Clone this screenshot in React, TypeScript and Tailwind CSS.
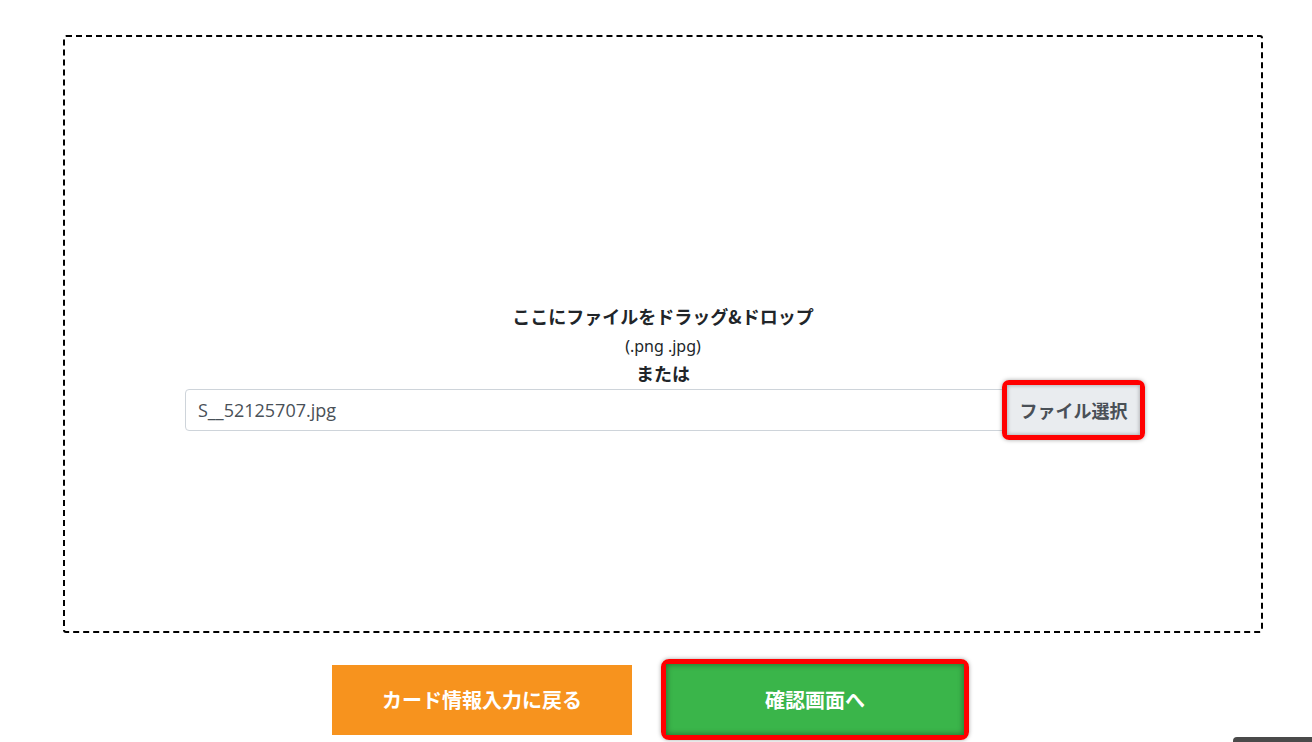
export default function App() {
  return (
    <div className="w-[1312px] h-[742px] bg-white overflow-hidden relative" style={{ fontFamily: '"Noto Sans CJK JP", "Noto Sans", sans-serif' }}>
      {/* ドロップエリア */}
      <div className="ml-[63px] mt-[35px] w-[1200px] h-[598px] border-2 border-dashed border-black rounded-[3px] flex flex-col items-center pt-[267px]">
        <div className="flex flex-col items-center text-[#212529]">
          <p className="text-[18px] font-bold leading-[24px]">ここにファイルをドラッグ&amp;ドロップ</p>
          <p className="text-[16px] leading-[28px] mt-[4px]" style={{ fontFamily: '"Noto Sans", "Noto Sans CJK JP", sans-serif' }}>(.png .jpg)</p>
          <p className="text-[18px] font-bold leading-[24px] mt-[1px]">または</p>
        </div>
        <div className="flex items-center w-[960px] -mt-[5px] ml-[4px]">
          <div className="flex-1 h-[42px] border border-[#ced4da] rounded-l-[4px] flex items-center px-[12px] text-[18px] text-[#495057]" style={{ fontFamily: '"Open Sans", "Noto Sans CJK JP", sans-serif' }}>
            S__52125707.jpg
          </div>
          <div className="-ml-[2px] border-[5px] border-[#ff0000] rounded-[7px] shadow-[0_0_4px_rgba(0,0,0,0.35)]">
            <div className="h-[50px] w-[133px] bg-[#e9ecef] flex items-center justify-center text-[18px] font-bold text-[#495057] shadow-[inset_0_0_4px_rgba(0,0,0,0.35)]">
              ファイル選択
            </div>
          </div>
        </div>
      </div>

      {/* ボタン */}
      <div className="flex items-center ml-[332px] mt-[26px] gap-[29px]">
        <button className="w-[300px] h-[70px] bg-[#f7931e] text-white text-[20px] font-bold">
          カード情報入力に戻る
        </button>
        <div className="border-[5px] border-[#ff0000] rounded-[8px] shadow-[0_0_4px_rgba(0,0,0,0.35)]">
          <button className="w-[298px] h-[71px] bg-[#3ab54a] text-white text-[20px] font-bold shadow-[inset_0_0_6px_rgba(0,0,0,0.45)]">
            確認画面へ
          </button>
        </div>
      </div>

      <div className="absolute left-[1233px] top-[737px] w-[90px] h-[10px] bg-[#4a4a4a] rounded-tl-[4px]" />
    </div>
  );
}
